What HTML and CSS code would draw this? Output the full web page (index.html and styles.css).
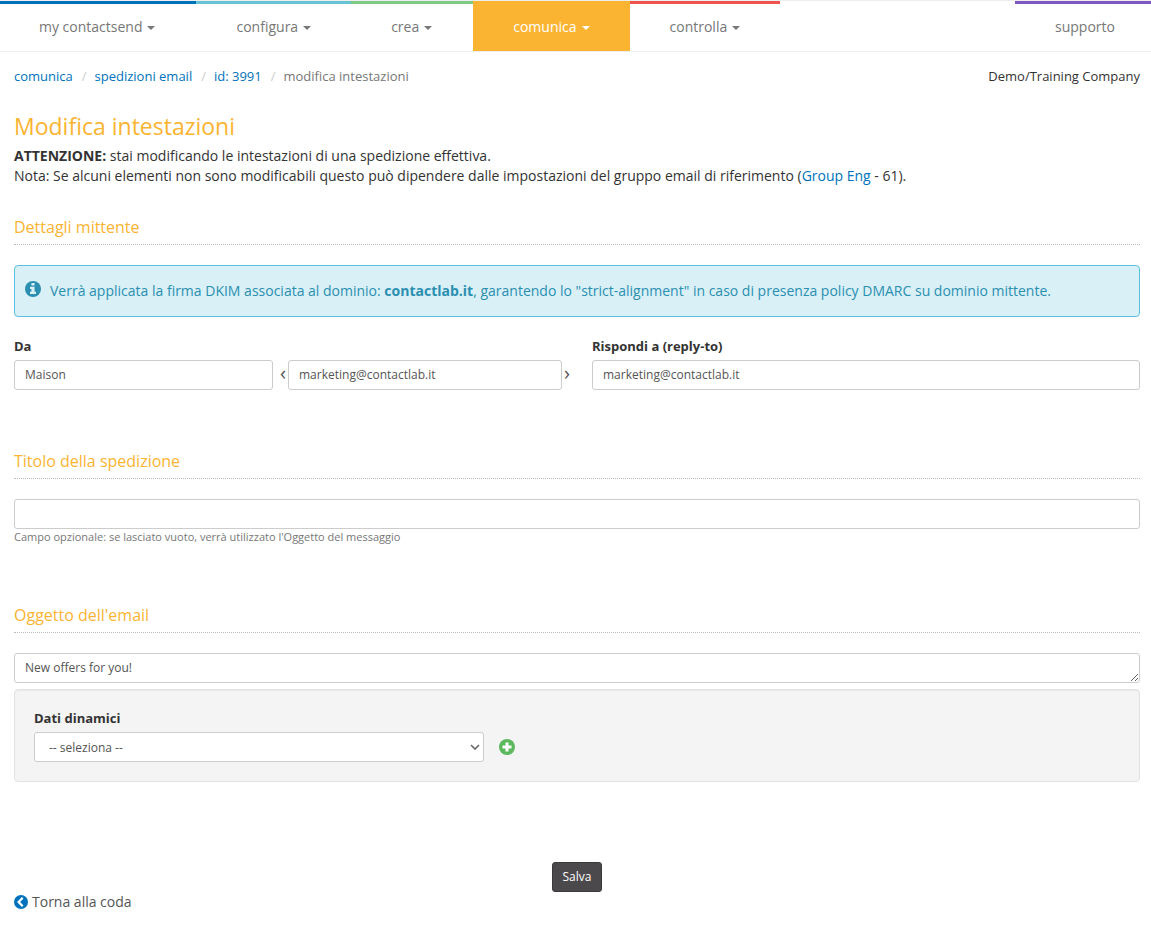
FILE: index.html
```html
<!DOCTYPE html>
<html lang="it">
<head>
<meta charset="utf-8">
<meta name="viewport" content="width=device-width, initial-scale=1">
<title>Modifica intestazioni</title>
<link rel="stylesheet" href="styles.css">
</head>
<body>
<nav class="navbar">
  <a class="nav-item nav-blue" href="#">my contactsend<span class="caret"></span></a>
  <a class="nav-item nav-cyan" href="#">configura<span class="caret"></span></a>
  <a class="nav-item nav-green" href="#">crea<span class="caret"></span></a>
  <a class="nav-item nav-active" href="#">comunica<span class="caret"></span></a>
  <a class="nav-item nav-red" href="#">controlla<span class="caret"></span></a>
  <a class="nav-item nav-purple" href="#">supporto</a>
</nav>
<main class="page">
  <div class="topline">
    <ol class="breadcrumb">
      <li><a href="#">comunica</a></li>
      <li><a href="#">spedizioni email</a></li>
      <li><a href="#">id: 3991</a></li>
      <li>modifica intestazioni</li>
    </ol>
    <span class="company">Demo/Training Company</span>
  </div>

  <h1 class="title">Modifica intestazioni</h1>
  <p class="intro"><strong>ATTENZIONE:</strong> stai modificando le intestazioni di una spedizione effettiva.<br>
  Nota: Se alcuni elementi non sono modificabili questo può dipendere dalle impostazioni del gruppo email di riferimento (<a href="#">Group Eng</a> - 61).</p>

  <form class="form">
    <section class="section">
      <h2 class="section-title">Dettagli mittente</h2>
      <div class="alert">
        <svg class="alert-icon" viewBox="0 0 16 16" aria-hidden="true"><circle cx="8" cy="8" r="8" fill="currentColor"/><path d="M6.4 2h3.2v2.6H6.4zM5 5.7h4.6v5H11v2.3H5v-2.3h1.4V8H5z" fill="#d9f0f7"/></svg>
        <span>Verrà applicata la firma DKIM associata al dominio: <strong>contactlab.it</strong>, garantendo lo "strict-alignment" in caso di presenza policy DMARC su dominio mittente.</span>
      </div>
      <div class="sender">
        <div class="group">
          <label class="label" for="from-name">Da</label>
          <div class="from">
            <input class="control" id="from-name" type="text" value="Maison">
            <span class="bracket bracket-open">‹</span>
            <input class="control" type="text" aria-label="Indirizzo email mittente" value="marketing@contactlab.it">
          </div>
        </div>
        <span class="bracket bracket-close">›</span>
        <div class="group">
          <label class="label" for="reply-to">Rispondi a (reply-to)</label>
          <input class="control" id="reply-to" type="text" value="marketing@contactlab.it">
        </div>
      </div>
    </section>

    <section class="section">
      <h2 class="section-title" id="delivery-title">Titolo della spedizione</h2>
      <input class="control" type="text" aria-labelledby="delivery-title" aria-describedby="delivery-help">
      <p class="help" id="delivery-help">Campo opzionale: se lasciato vuoto, verrà utilizzato l'Oggetto del messaggio</p>
    </section>

    <section class="section">
      <h2 class="section-title" id="subject-title">Oggetto dell'email</h2>
      <textarea class="control subject" rows="1" aria-labelledby="subject-title">New offers for you!</textarea>
      <div class="well">
        <label class="label" for="dynamic">Dati dinamici</label>
        <div class="dynamic">
          <div class="select-wrap">
            <select class="control select" id="dynamic"><option>-- seleziona --</option></select>
            <svg class="chevron" viewBox="0 0 10 6" aria-hidden="true"><path d="M1 1l4 4 4-4" fill="none" stroke="currentColor" stroke-width="1.6"/></svg>
          </div>
          <button class="add" type="button" aria-label="Aggiungi"><svg viewBox="0 0 16 16" aria-hidden="true"><circle cx="8" cy="8" r="8" fill="currentColor"/><path d="M6.5 3.5h3v3h3v3h-3v3h-3v-3h-3v-3h3z" fill="#fff"/></svg></button>
        </div>
      </div>
    </section>

    <button class="save" type="submit">Salva</button>
  </form>
  <a class="back" href="#"><svg class="back-icon" viewBox="0 0 14 14" aria-hidden="true"><circle cx="7" cy="7" r="7" fill="currentColor"/><path d="M8.7 2.8L4.6 7l4.1 4.2" fill="none" stroke="#fff" stroke-width="2.2"/></svg>Torna alla coda</a>
</main>
</body>
</html>
```

FILE: styles.css
```css
* {
  box-sizing: border-box;
}

body {
  margin: 0;
  background: #fff;
  color: #333;
  font: 14px/20px "Open Sans", "Noto Sans", sans-serif;
}

a {
  color: #0072bc;
  text-decoration: none;
}

.navbar {
  display: flex;
  border-top: 1px solid #eee;
  border-bottom: 1px solid #eee;
}

.nav-item {
  display: flex;
  align-items: center;
  gap: 5px;
  height: 50px;
  padding: 0 40px 2px;
  border-top: 3px solid;
  color: #777;
}

.nav-blue {
  padding-right: 41px;
  padding-left: 39px;
  border-color: #0072bc;
}

.nav-cyan {
  border-color: #66c3d5;
}

.nav-green {
  padding-right: 41px;
  border-color: #7fca85;
}

.nav-active {
  border-color: #fbb432;
  background: #fbb432;
  color: #fff;
}

.nav-red {
  border-color: #ef5350;
}

.nav-purple {
  margin-left: auto;
  padding-right: 36px;
  border-color: #7e57c2;
}

.caret {
  margin-top: 2px;
  border: 4px solid transparent;
  border-top-color: currentColor;
  border-bottom: 0;
}

.page {
  padding: 14px 11px 16px 14px;
}

.topline {
  display: flex;
  justify-content: space-between;
  font-size: 13px;
}

.breadcrumb {
  display: flex;
  margin: 0;
  padding: 0;
  list-style: none;
  color: #777;
}

.breadcrumb li + li::before {
  content: "/";
  padding: 0 8px 0 9px;
  color: #ccc;
}

.title {
  margin: 27px 0 7px;
  color: #fbb432;
  font-size: 23px;
  font-weight: 400;
  line-height: 26px;
}

.intro {
  margin: 0;
}

.section {
  margin-top: 61px;
}

.section:first-child {
  margin-top: 31px;
}

.section-title {
  margin: 0 0 20px;
  padding-bottom: 7px;
  border-bottom: 1px dotted #bbb;
  color: #fbb432;
  font-size: 16px;
  font-weight: 400;
  line-height: 20px;
}

.alert {
  display: flex;
  gap: 9px;
  margin-bottom: 19px;
  padding: 15px 10px;
  border: 1px solid #5bc0de;
  border-radius: 4px;
  background: #d9f0f7;
  color: #2a8fb0;
}

.alert-icon {
  flex: none;
  width: 16px;
  height: 16px;
}

.label {
  display: block;
  margin-bottom: 4px;
  font-size: 13px;
  font-weight: 700;
}

.sender {
  display: flex;
  align-items: flex-end;
}

.group {
  flex: 1 1 0;
  min-width: 0;
}

.from {
  display: grid;
  grid-template-columns: minmax(0, 259fr) 15px minmax(0, 274fr);
}

.bracket {
  height: 30px;
  color: #555;
  font-size: 20px;
  line-height: 26px;
}

.bracket-open {
  padding-left: 7px;
}

.bracket-close {
  flex: none;
  width: 30px;
  padding-left: 2px;
}

.control {
  display: block;
  width: 100%;
  height: 30px;
  padding: 3px 10px 5px;
  border: 1px solid #ccc;
  border-radius: 3px;
  background: #fff;
  color: #555;
  font: 12px/20px "Open Sans", "Noto Sans", sans-serif;
}

.help {
  margin: 0;
  color: #777;
  font-size: 11px;
  line-height: 16px;
}

.section:nth-child(3) {
  margin-top: 60px;
}

.subject {
  padding: 4px 10px;
  overflow: hidden;
  resize: vertical;
}

.well {
  margin-top: 6px;
  padding: 18px 19px 19px;
  border: 1px solid #e3e3e3;
  border-radius: 4px;
  background: #f4f4f4;
  box-shadow: inset 0 1px 1px rgba(0, 0, 0, 0.05);
}

.dynamic {
  display: flex;
  align-items: center;
  gap: 15px;
}

.select-wrap {
  position: relative;
  width: 450px;
  max-width: 90%;
}

.select {
  padding: 5px 14px 3px;
  appearance: none;
}

.chevron {
  position: absolute;
  top: 12px;
  right: 4px;
  width: 10px;
  height: 6px;
  color: #666;
  pointer-events: none;
}

.add {
  display: flex;
  padding: 0;
  border: 0;
  background: none;
  color: #5cb85c;
}

.add svg {
  width: 16px;
  height: 16px;
}

.save {
  display: block;
  margin: 80px auto 0;
  padding: 4px 10px;
  border: 1px solid #3c393c;
  border-radius: 3px;
  background: #4c494c;
  color: #fff;
  font: 12px/20px "Open Sans", "Noto Sans", sans-serif;
}

.back {
  display: inline-flex;
  align-items: center;
  gap: 4px;
  color: #555;
}

.back-icon {
  width: 14px;
  height: 14px;
  color: #0072bc;
}
```
